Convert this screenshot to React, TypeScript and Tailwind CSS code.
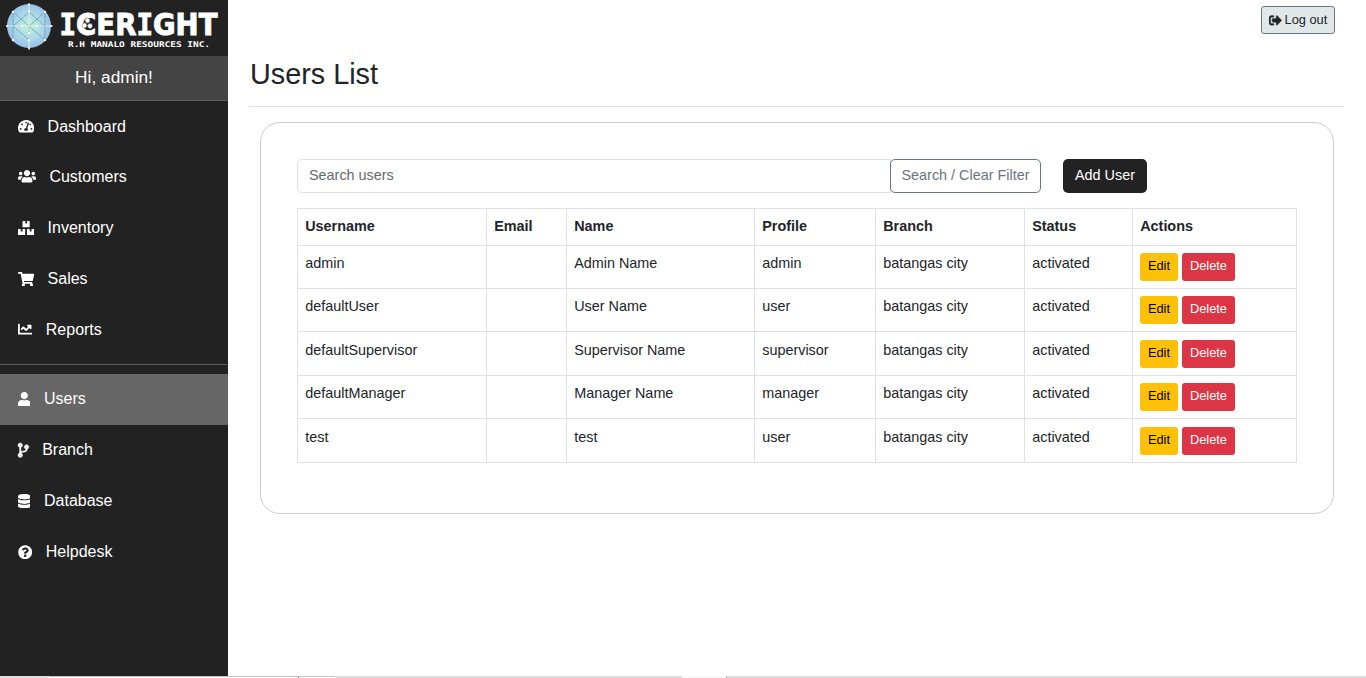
import React from "react";
import {
  FaTachometerAlt,
  FaUsers,
  FaBoxes,
  FaShoppingCart,
  FaChartLine,
  FaUser,
  FaCodeBranch,
  FaDatabase,
  FaQuestionCircle,
  FaSignOutAlt,
} from "react-icons/fa";

type NavEntry = { label: string; icon: React.ReactNode; active?: boolean };

const mainNav: NavEntry[] = [
  { label: "Dashboard", icon: <FaTachometerAlt className="h-[14.4px] w-[16.2px]" /> },
  { label: "Customers", icon: <FaUsers className="h-[14.4px] w-[18px]" /> },
  { label: "Inventory", icon: <FaBoxes className="mt-px h-[14.4px] w-[16.2px]" /> },
  { label: "Sales", icon: <FaShoppingCart className="mt-px h-[14.4px] w-[16.2px]" /> },
  { label: "Reports", icon: <FaChartLine className="h-[14.4px] w-[14.4px]" /> },
];

const adminNav: NavEntry[] = [
  { label: "Users", icon: <FaUser className="mt-px h-[14.4px] w-[12.6px]" />, active: true },
  {
    label: "Branch",
    icon: <FaCodeBranch className="mt-px h-[14.4px] w-[10.8px] overflow-visible [stroke-width:16]" />,
  },
  { label: "Database", icon: <FaDatabase className="mt-px h-[14.4px] w-[12.6px]" /> },
  { label: "Helpdesk", icon: <FaQuestionCircle className="mt-px h-[14.4px] w-[14.4px]" /> },
];

const columns = ["Username", "Email", "Name", "Profile", "Branch", "Status", "Actions"];

const users = [
  { username: "admin", name: "Admin Name", profile: "admin", height: "h-[43px]", low: false },
  { username: "defaultUser", name: "User Name", profile: "user", height: "h-[43px]", low: false },
  { username: "defaultSupervisor", name: "Supervisor Name", profile: "supervisor", height: "h-[44px]", low: true },
  { username: "defaultManager", name: "Manager Name", profile: "manager", height: "h-[43px]", low: false },
  { username: "test", name: "test", profile: "user", height: "h-[44px]", low: true },
];

const serifLetter = "'DejaVu Sans Mono', monospace";

function Logo() {
  return (
    <svg className="block h-14 w-[228px]" viewBox="0 0 228 56">
      <defs>
        <radialGradient id="globe">
          <stop offset="0" stopColor="#c4f3d0" />
          <stop offset="0.55" stopColor="#aedbe6" />
          <stop offset="1" stopColor="#98c0e8" />
        </radialGradient>
      </defs>
      <circle cx="29" cy="26" r="22" fill="url(#globe)" />
      <path
        d="M13 12v28M45 12v28M13 12l32 28M45 12L29 26M29 12L13 26M29 12l16 14M13 26l16 14M29 26v14"
        stroke="#5f9fb8"
        strokeWidth="0.9"
        strokeDasharray="3 0.6"
        fill="none"
      />
      <path d="M29 3v47M6 26h47" stroke="#d9f1f5" strokeWidth="0.8" />
      <g fill="#fff">
        <circle cx="29" cy="4.5" r="1" />
        <circle cx="29" cy="48" r="1" />
        <circle cx="7" cy="26" r="1" />
        <circle cx="22" cy="26" r="1.2" />
        <circle cx="29" cy="11.5" r="1.2" />
        <circle cx="37" cy="26" r="1.3" />
        <circle cx="51" cy="26" r="1" />
        <circle cx="13" cy="12" r="1.2" />
        <circle cx="45" cy="12" r="1.2" />
        <circle cx="13" cy="40" r="1.2" />
        <circle cx="45" cy="40" r="1.2" />
        <circle cx="29" cy="33" r="1.2" />
        <circle cx="29" cy="40" r="1.2" />
      </g>
      <text
        x="59.5"
        y="35"
        textLength="158"
        lengthAdjust="spacingAndGlyphs"
        fill="#fff"
        stroke="#fff"
        strokeWidth="1"
        fontSize="31"
        fontWeight="700"
        fontFamily="'DejaVu Sans', sans-serif"
      >
        <tspan fontFamily={serifLetter}>I</tspan>CER<tspan fontFamily={serifLetter}>I</tspan>GHT
      </text>
      <g fill="#fff" stroke="#777" strokeWidth="0.6">
        <circle cx="87.5" cy="20.5" r="2.4" />
        <circle cx="84.5" cy="25.5" r="2.4" />
        <circle cx="90" cy="26" r="2.4" />
      </g>
      <text
        x="68"
        y="46.5"
        textLength="142"
        lengthAdjust="spacingAndGlyphs"
        fill="#fff"
        fontSize="7.8"
        fontWeight="700"
        fontFamily={serifLetter}
      >
        R.H MANALO RESOURCES INC.
      </text>
    </svg>
  );
}

function NavItem({ label, icon, active }: NavEntry) {
  return (
    <a
      className={
        active
          ? "flex h-[51px] items-center bg-[#666] pb-[2px] pl-[17.6px]"
          : "flex h-[51px] items-center pb-[2px] pl-[17.6px] first:pb-0"
      }
    >
      {icon}
      <span className="ml-[13.8px] leading-6">{label}</span>
    </a>
  );
}

export default function App() {
  return (
    <div className="flex h-[678px] flex-col overflow-hidden bg-white font-['Liberation_Sans',Arial,sans-serif] text-[#212529]">
      <div className="flex min-h-0 flex-1">
        <aside className="w-[228px] shrink-0 bg-[#222] text-base text-white">
          <Logo />
          <div className="flex h-[45px] items-center justify-center border-b border-[#5a5c5b] bg-[#444] text-[17.3px]">
            Hi, admin!
          </div>
          <nav>
            {mainNav.map((n) => (
              <NavItem key={n.label} {...n} />
            ))}
            <hr className="mt-2 mb-[9px] border-[#5a5c5b]" />
            {adminNav.map((n) => (
              <NavItem key={n.label} {...n} />
            ))}
          </nav>
        </aside>
        <main className="flex-1 pt-[6px] pr-[22px] pl-[21px]">
          <div className="flex justify-end pr-[9px]">
            <button className="flex h-7 w-[74px] items-center justify-center gap-[3px] rounded-[3px] border border-[#6c757d] bg-[#e2e8e8] text-[12.8px]">
              <FaSignOutAlt className="h-[12.8px] w-[12.8px] [stroke-width:14]" />
              Log out
            </button>
          </div>
          <h1 className="mt-[23px] h-[50px] border-b border-[#dee2e6] pl-px text-[28.8px] leading-[34px]">Users List</h1>
          <section className="mt-[15px] mr-[10px] ml-[11px] h-[392px] rounded-[20px] border border-[#ccc] px-9 pt-9 text-[14.4px]">
            <div className="flex h-[34px]">
              <input
                className="w-[594px] rounded-l-[5px] border border-[#dee2e6] px-[11px] placeholder:text-[#65696d]"
                placeholder="Search users"
              />
              <button className="-ml-px w-[151px] rounded-[5px] border border-[#6c757d] bg-white text-[#6c757d]">
                Search / Clear Filter
              </button>
              <button className="ml-[22px] w-[84px] rounded-[5px] bg-[#222] text-white">Add User</button>
            </div>
            <table className="mt-[15px] w-[1000px] table-fixed border-collapse text-left leading-[21.6px]">
              <colgroup>
                <col className="w-[189px]" />
                <col className="w-[80px]" />
                <col className="w-[188px]" />
                <col className="w-[121px]" />
                <col className="w-[149px]" />
                <col className="w-[108px]" />
                <col className="w-[164px]" />
              </colgroup>
              <thead>
                <tr className="h-[37px]">
                  {columns.map((c) => (
                    <th key={c} className="border border-[#dee2e6] px-[7.2px] pt-[7px] pb-0 align-top font-bold">
                      {c}
                    </th>
                  ))}
                </tr>
              </thead>
              <tbody>
                {users.map((u) => (
                  <tr key={u.username} className={u.height}>
                    {[u.username, "", u.name, u.profile, "batangas city", "activated"].map((v, i) => (
                      <td
                        key={i}
                        className={
                          u.low
                            ? "border border-[#dee2e6] px-[7.2px] pt-[8px] pb-0 align-top"
                            : "border border-[#dee2e6] px-[7.2px] pt-[7px] pb-0 align-top"
                        }
                      >
                        {v}
                      </td>
                    ))}
                    <td
                      className={
                        u.low
                          ? "border border-[#dee2e6] px-[7px] pt-[8px] pb-0 align-top"
                          : "border border-[#dee2e6] px-[7px] pt-[7px] pb-0 align-top"
                      }
                    >
                      <div className="flex gap-1 text-[12.8px]">
                        <button className="h-7 w-[38px] rounded-[3px] bg-[#ffc107] pb-[2px] text-black">Edit</button>
                        <button className="h-7 w-[53px] rounded-[3px] bg-[#dc3545] pb-[2px] text-white">Delete</button>
                      </div>
                    </td>
                  </tr>
                ))}
              </tbody>
            </table>
          </section>
        </main>
      </div>
      <footer className="flex h-[2px] shrink-0 bg-[#dedede]">
        <div className="ml-[49px] h-[2px] w-[286px] border-t border-[#c4c4c4] bg-white pl-[249px]">
          <div className="h-px w-px bg-[#a05060]" />
        </div>
        <div className="ml-[347px] h-[2px] w-[44px] bg-[#f8f8f8]" />
        <div className="h-[2px] w-px bg-[#bbb]" />
      </footer>
    </div>
  );
}
